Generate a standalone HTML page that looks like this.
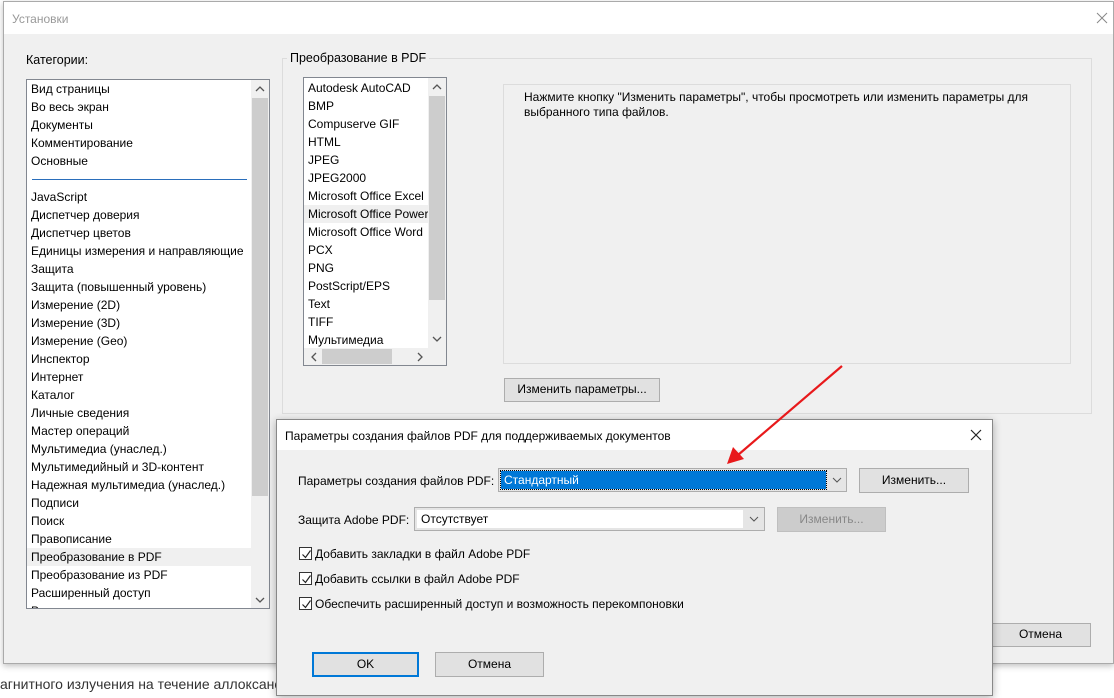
<!DOCTYPE html>
<html><head><meta charset="utf-8"><style>
*{box-sizing:border-box;margin:0;padding:0}
body{width:1114px;height:698px;overflow:hidden;background:#fff;font-family:"Liberation Sans",sans-serif;font-size:12px;color:#000;position:relative}
.a{position:absolute}
.btn{position:absolute;background:#e1e1e1;border:1px solid #adadad;text-align:center;line-height:21px;font-size:12px}
.it{position:absolute;left:0;top:0}
.it > div{height:18px;line-height:18px;padding-left:4px;white-space:nowrap;position:relative}
.cb{position:absolute;width:13px;height:13px;border:1px solid #333;background:#fff}
.cb svg{position:absolute;left:1px;top:1px}
</style></head><body>
<div class="a" style="left:0;top:676px;font-size:14px;color:#333;white-space:nowrap">агнитного излучения на течение аллоксано</div>
<!-- main dialog -->
<div class="a" style="left:3px;top:1px;width:1111px;height:663px;background:#f0f0f0;border:1px solid #aaa;box-shadow:0 2px 6px rgba(0,0,0,.25)">
  <div class="a" style="left:0;top:0;width:100%;height:32px;background:#fff"></div>
  <div class="a" style="left:8px;top:10px;color:#999;font-size:12px">Установки</div>
  <svg class="a" style="left:1092px;top:10px" width="12" height="12"><path d="M1 1L11 11M11 1L1 11" stroke="#888" stroke-width="1"/></svg>
  <div class="a" style="left:22px;top:51px;font-size:12.5px">Категории:</div>
  <div class="a" style="left:22px;top:77px;width:244px;height:530px;background:#fff;border:1px solid #828790;overflow:hidden">
    <div class="a" style="left:224px;top:0;width:18px;height:528px;background:#f0f0f0"></div>
    <div class="a" style="left:225px;top:18px;width:16px;height:398px;background:#cdcdcd"></div>
    <svg class="a" style="left:228px;top:5px" width="10" height="8"><path d="M1 6L5 2L9 6" stroke="#555" fill="none" stroke-width="1.3"/></svg>
    <svg class="a" style="left:228px;top:516px" width="10" height="8"><path d="M1 2L5 6L9 2" stroke="#555" fill="none" stroke-width="1.3"/></svg>
    <div class="it" style="width:224px">
    <div>Вид страницы</div><div>Во весь экран</div><div>Документы</div><div>Комментирование</div><div>Основные</div>
    <div><span style="position:absolute;left:5px;right:4px;top:9px;border-top:1px solid #2a6ebb"></span></div>
    <div>JavaScript</div><div>Диспетчер доверия</div><div>Диспетчер цветов</div><div>Единицы измерения и направляющие</div><div>Защита</div><div>Защита (повышенный уровень)</div><div>Измерение (2D)</div><div>Измерение (3D)</div><div>Измерение (Geo)</div><div>Инспектор</div><div>Интернет</div><div>Каталог</div><div>Личные сведения</div><div>Мастер операций</div><div>Мультимедиа (унаслед.)</div><div>Мультимедийный и 3D-контент</div><div>Надежная мультимедиа (унаслед.)</div><div>Подписи</div><div>Поиск</div><div>Правописание</div><div style="background:#f0f0f0">Преобразование в PDF</div><div>Преобразование из PDF</div><div>Расширенный доступ</div><div>Рецензирование</div>
    </div>
  </div>
  <div class="a" style="left:278px;top:56px;width:810px;height:356px;border:1px solid #dcdcdc"></div>
  <div class="a" style="left:283px;top:49px;background:#f0f0f0;padding:0 3px;font-size:12.5px">Преобразование в PDF</div>
  <div class="a" style="left:299px;top:75px;width:144px;height:289px;background:#fff;border:1px solid #828790;overflow:hidden">
    <div class="it" style="width:124px;overflow:hidden;top:1px;height:270px">
    <div>Autodesk AutoCAD</div><div>BMP</div><div>Compuserve GIF</div><div>HTML</div><div>JPEG</div><div>JPEG2000</div><div>Microsoft Office Excel</div><div style="background:#f0f0f0">Microsoft Office PowerPoint</div><div>Microsoft Office Word</div><div>PCX</div><div>PNG</div><div>PostScript/EPS</div><div>Text</div><div>TIFF</div><div>Мультимедиа</div>
    </div>
    <div class="a" style="left:124px;top:0;width:18px;height:270px;background:#f0f0f0"></div>
    <div class="a" style="left:125px;top:18px;width:16px;height:204px;background:#cdcdcd"></div>
    <div class="a" style="left:0;top:270px;width:142px;height:17px;background:#f0f0f0"></div>
    <div class="a" style="left:18px;top:271px;width:70px;height:15px;background:#cdcdcd"></div>
    <svg class="a" style="left:128px;top:5px" width="10" height="8"><path d="M1 6L5 2L9 6" stroke="#555" fill="none" stroke-width="1.3"/></svg>
    <svg class="a" style="left:128px;top:257px" width="10" height="8"><path d="M1 2L5 6L9 2" stroke="#555" fill="none" stroke-width="1.3"/></svg>
    <svg class="a" style="left:6px;top:274px" width="8" height="10"><path d="M6 1L2 5L6 9" stroke="#555" fill="none" stroke-width="1.3"/></svg>
    <svg class="a" style="left:112px;top:274px" width="8" height="10"><path d="M2 1L6 5L2 9" stroke="#555" fill="none" stroke-width="1.3"/></svg>
  </div>
  <div class="a" style="left:499px;top:82px;width:568px;height:280px;border:1px solid #dcdcdc"></div>
  <div class="a" style="left:520px;top:88px;width:540px;line-height:15px">Нажмите кнопку "Изменить параметры", чтобы просмотреть или изменить параметры для выбранного типа файлов.</div>
  <div class="btn" style="left:500px;top:376px;width:156px;height:24px">Изменить параметры...</div>
  <div class="btn" style="left:986px;top:621px;width:101px;height:24px">Отмена</div>
</div>
<!-- sub dialog -->
<div class="a" style="left:276px;top:419px;width:717px;height:277px;background:#f0f0f0;border:1px solid #888;box-shadow:0 2px 8px rgba(0,0,0,.3)">
  <div class="a" style="left:0;top:0;width:100%;height:30px;background:#fff"></div>
  <div class="a" style="left:8px;top:9px">Параметры создания файлов PDF для поддерживаемых документов</div>
  <svg class="a" style="left:693px;top:9px" width="12" height="12"><path d="M1 1L11 11M11 1L1 11" stroke="#222" stroke-width="1.2"/></svg>
  <div class="a" style="left:21px;top:54px">Параметры создания файлов PDF:</div>
  <div class="a" style="left:221px;top:48px;width:349px;height:24px;background:#e5e5e5;border:1px solid #adadad">
    <div class="a" style="left:2px;top:2px;width:325px;height:18px;background:#0078d7;color:#fff;padding-left:3px;line-height:18px;outline:1px dotted #000">Стандартный</div>
    <svg class="a" style="left:333px;top:8px" width="10" height="7"><path d="M1 1L5 5L9 1" stroke="#555" fill="none"/></svg>
  </div>
  <div class="btn" style="left:582px;top:48px;width:110px;height:25px;line-height:23px">Изменить...</div>
  <div class="a" style="left:21px;top:93px">Защита Adobe PDF:</div>
  <div class="a" style="left:137px;top:87px;width:351px;height:24px;background:#e5e5e5;border:1px solid #adadad">
    <div class="a" style="left:2px;top:2px;width:326px;height:18px;background:#fff;padding-left:4px;line-height:18px">Отсутствует</div>
    <svg class="a" style="left:334px;top:8px" width="10" height="7"><path d="M1 1L5 5L9 1" stroke="#555" fill="none"/></svg>
  </div>
  <div class="btn" style="left:500px;top:87px;width:109px;height:25px;line-height:23px;background:#ccc;border-color:#bfbfbf;color:#888">Изменить...</div>
  <div class="cb" style="left:22px;top:127px"><svg width="11" height="11"><path d="M1.5 5.5L4.5 8.5L9.5 1.5" stroke="#222" fill="none" stroke-width="1.2"/></svg></div>
  <div class="a" style="left:38px;top:127px">Добавить закладки в файл Adobe PDF</div>
  <div class="cb" style="left:22px;top:152px"><svg width="11" height="11"><path d="M1.5 5.5L4.5 8.5L9.5 1.5" stroke="#222" fill="none" stroke-width="1.2"/></svg></div>
  <div class="a" style="left:38px;top:152px">Добавить ссылки в файл Adobe PDF</div>
  <div class="cb" style="left:22px;top:177px"><svg width="11" height="11"><path d="M1.5 5.5L4.5 8.5L9.5 1.5" stroke="#222" fill="none" stroke-width="1.2"/></svg></div>
  <div class="a" style="left:38px;top:177px">Обеспечить расширенный доступ и возможность перекомпоновки</div>
  <div class="btn" style="left:35px;top:232px;width:107px;height:25px;border:2px solid #0078d7;line-height:21px">OK</div>
  <div class="btn" style="left:158px;top:232px;width:109px;height:25px;line-height:23px">Отмена</div>
</div>
<!-- arrow -->
<svg class="a" style="left:0;top:0" width="1114" height="698"><line x1="842" y1="366" x2="738" y2="455" stroke="#e8191b" stroke-width="2.2"/><path d="M727 464L733 447L744 459Z" fill="#e8191b"/></svg>
</body></html>
